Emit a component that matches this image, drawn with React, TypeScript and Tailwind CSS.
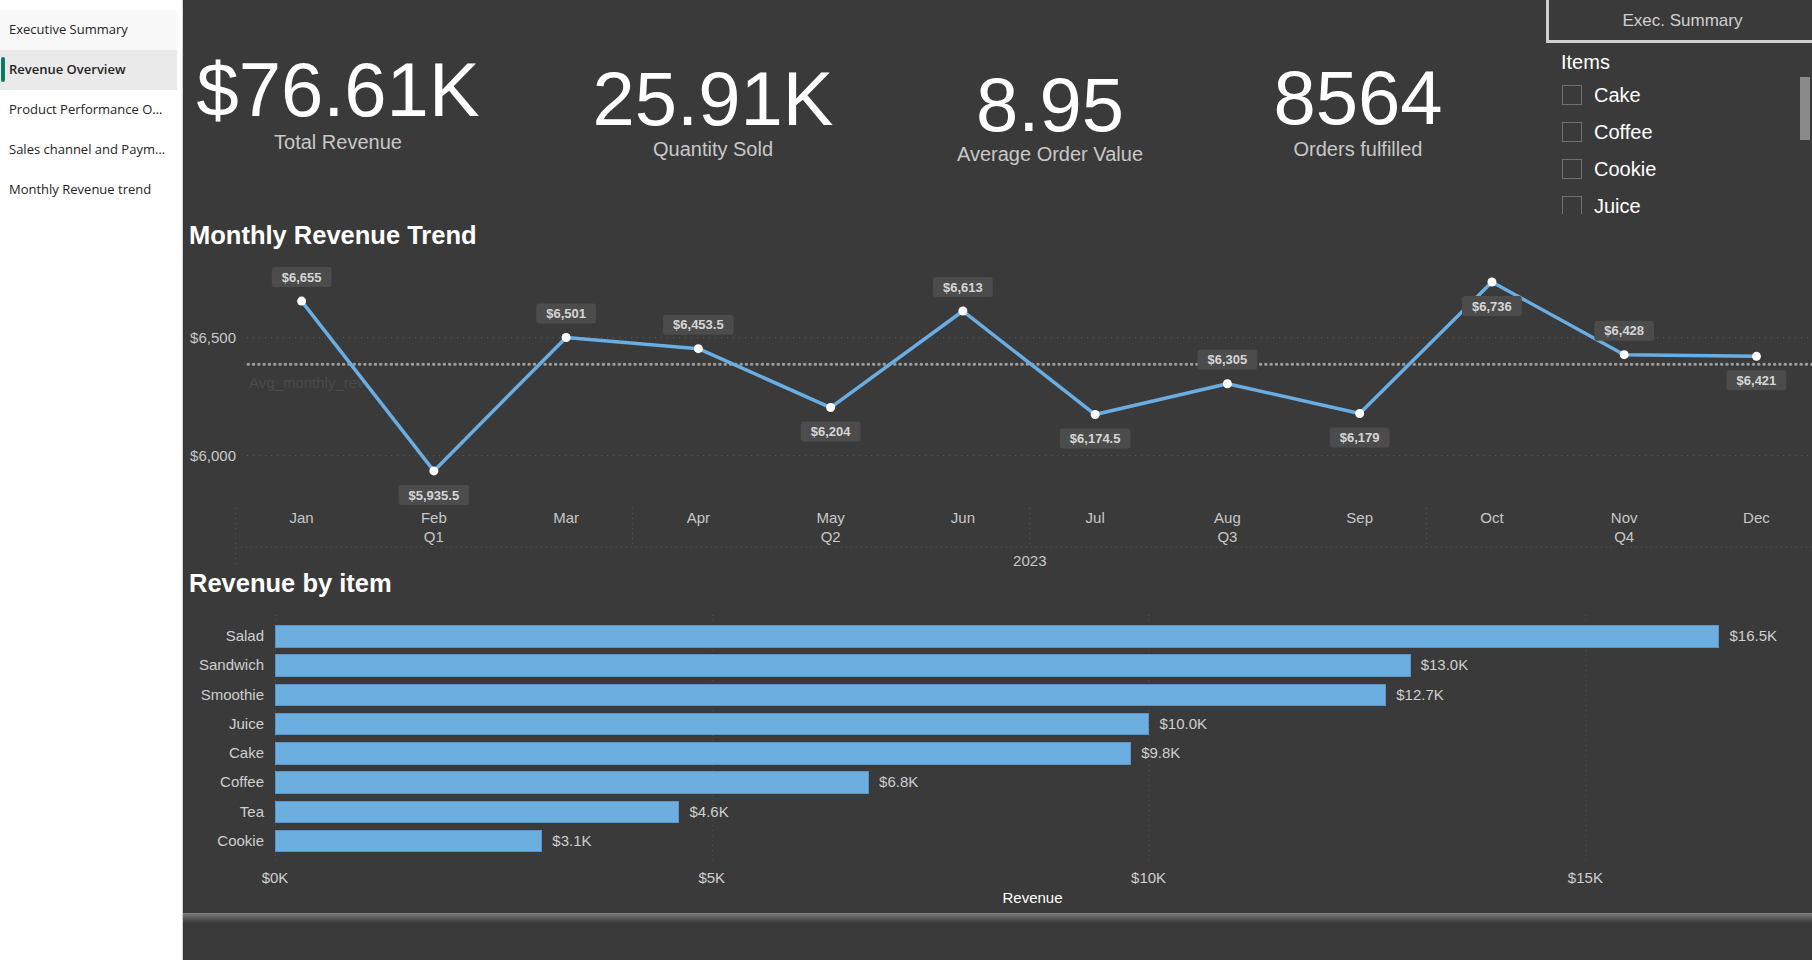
import React from 'react'

const pages = [
    'Executive Summary',
    'Revenue Overview',
    'Product Performance Overview',
    'Sales channel and Payment method',
    'Monthly Revenue trend',
]

const kpis = [
    { value: '$76.61K', label: 'Total Revenue', box: 'ml-[5px] pt-[52px]', gap: 'mt-[3px]' },
    { value: '25.91K', label: 'Quantity Sold', box: 'ml-[75px] pt-[61px]', gap: 'mt-[1px]' },
    { value: '8.95', label: 'Average Order Value', box: 'ml-[37px] pt-[67px]', gap: 'mt-0' },
    { value: '8564', label: 'Orders fulfilled', box: 'ml-[8px] pt-[60px]', gap: 'mt-[2px]' },
]

const slicerItems = ['Cake', 'Coffee', 'Cookie', 'Juice', 'Salad']

// monthly revenue, label position relative to the point
const months = [
    { m: 'Jan', v: 6655, label: '$6,655', up: true },
    { m: 'Feb', v: 5935.5, label: '$5,935.5', up: false, q: 'Q1' },
    { m: 'Mar', v: 6501, label: '$6,501', up: true },
    { m: 'Apr', v: 6453.5, label: '$6,453.5', up: true },
    { m: 'May', v: 6204, label: '$6,204', up: false, q: 'Q2' },
    { m: 'Jun', v: 6613, label: '$6,613', up: true },
    { m: 'Jul', v: 6174.5, label: '$6,174.5', up: false },
    { m: 'Aug', v: 6305, label: '$6,305', up: true, q: 'Q3' },
    { m: 'Sep', v: 6179, label: '$6,179', up: false },
    { m: 'Oct', v: 6736, label: '$6,736', up: false },
    { m: 'Nov', v: 6428, label: '$6,428', up: true, q: 'Q4' },
    { m: 'Dec', v: 6421, label: '$6,421', up: false },
]

const items = [
    { name: 'Salad', v: 16535, label: '$16.5K' },
    { name: 'Sandwich', v: 13000, label: '$13.0K' },
    { name: 'Smoothie', v: 12720, label: '$12.7K' },
    { name: 'Juice', v: 10010, label: '$10.0K' },
    { name: 'Cake', v: 9800, label: '$9.8K' },
    { name: 'Coffee', v: 6800, label: '$6.8K' },
    { name: 'Tea', v: 4630, label: '$4.6K' },
    { name: 'Cookie', v: 3060, label: '$3.1K' },
]

const X0 = 118.6
const DX = 132.26
const xOf = (i: number) => X0 + i * DX
const yOf = (v: number) => 87.7 - (v - 6500) * 0.236

// rough Arial bold widths for the data labels
const labelWidth = (s: string) =>
    s.split('').reduce((w, c) => w + (c === ',' || c === '.' ? 0.278 : 0.556), 0) * 13 + 20

function Sidebar() {
    return (
        <aside className="h-full w-[183px] shrink-0 border-r border-[#d0d0d0] bg-white pt-[10px] font-['Open_Sans',sans-serif]">
            {pages.map((p, i) => (
                <div
                    key={p}
                    className={`relative flex h-[40px] w-[177px] items-center pl-[9px] pr-[10px] text-[13px] text-[#252423] ${
                        i === 1 ? 'bg-[#eaeaea] font-semibold' : i === 0 ? 'bg-[#f8f8f8]' : ''
                    }`}
                >
                    {i === 1 && <span className="absolute left-[1px] top-[7px] h-[25px] w-[4px] rounded-full bg-[#117865]" />}
                    <span className="block truncate">{p}</span>
                </div>
            ))}
        </aside>
    )
}

function Slicer() {
    return (
        <div className="relative w-[266px] shrink-0 overflow-hidden">
            <div className="flex h-[43px] w-[270px] items-center justify-center border-b-[3px] border-l-[3px] border-[#cfcfcf] pt-[1px] text-[17px] text-[#d0d0d0]">
                Exec. Summary
            </div>
            <div className="mt-[7px] pl-[15px] text-[20px] leading-[24px] text-white">Items</div>
            <div className="mt-[2px] h-[138px] overflow-hidden">
                {slicerItems.map((it) => (
                    <div key={it} className="flex h-[37px] items-center gap-[12px] pl-[16px]">
                        <span className="h-[20px] w-[20px] border border-[#707070]" />
                        <span className="text-[20px] text-white">{it}</span>
                    </div>
                ))}
            </div>
            <div className="absolute right-[2px] top-[77px] h-[63px] w-[10px] bg-[#8a8a8a]" />
        </div>
    )
}

function LineChart() {
    const pts = months.map((d, i) => `${xOf(i)},${yOf(d.v)}`).join(' ')
    return (
        <svg width={1629} height={318} viewBox="0 0 1629 318" className="block shrink-0">
            {/* y gridlines */}
            <line x1={64} x2={1629} y1={87.7} y2={87.7} stroke="#606060" strokeDasharray="1 5" />
            <line x1={64} x2={1629} y1={205.7} y2={205.7} stroke="#606060" strokeDasharray="1 5" />
            <text x={53} y={93} textAnchor="end" fontSize={15} fill="#c8c8c8">$6,500</text>
            <text x={53} y={211} textAnchor="end" fontSize={15} fill="#c8c8c8">$6,000</text>

            {/* average line */}
            <text x={66} y={138} fontSize={15} fill="#4a4a4a">Avg_monthly_rev</text>
            <line
                x1={65}
                x2={1629}
                y1={114.3}
                y2={114.3}
                stroke="#9c9c9c"
                strokeWidth={3}
                strokeDasharray="0.5 4.8"
                strokeLinecap="round"
            />

            {/* x axis */}
            <line x1={52.7} x2={52.7} y1={258} y2={318} stroke="#5c5c5c" strokeDasharray="1 4" />
            {[449.3, 846.8, 1243.5].map((x) => (
                <line key={x} x1={x} x2={x} y1={258} y2={297} stroke="#5c5c5c" strokeDasharray="1 4" />
            ))}
            <line x1={52.7} x2={1629} y1={297} y2={297} stroke="#5c5c5c" strokeDasharray="1 4" />
            {months.map((d, i) => (
                <text key={d.m} x={xOf(i)} y={273} textAnchor="middle" fontSize={15} fill="#c8c8c8">
                    {d.m}
                </text>
            ))}
            {months.map((d, i) =>
                d.q ? (
                    <text key={d.q} x={xOf(i)} y={291.5} textAnchor="middle" fontSize={15} fill="#c8c8c8">
                        {d.q}
                    </text>
                ) : null
            )}
            <text x={846.8} y={316} textAnchor="middle" fontSize={15} fill="#c8c8c8">2023</text>

            {/* series */}
            <polyline points={pts} fill="none" stroke="#6aade2" strokeWidth={3.5} strokeLinejoin="round" />
            {months.map((d, i) => (
                <circle key={d.m} cx={xOf(i)} cy={yOf(d.v)} r={4.5} fill="#ffffff" />
            ))}
            {months.map((d, i) => {
                const cx = xOf(i)
                const cy = yOf(d.v) + (d.up ? -24 : 24)
                const w = labelWidth(d.label)
                return (
                    <g key={d.label}>
                        <rect x={cx - w / 2} y={cy - 10} width={w} height={20} rx={3} fill="#4c4c4c" />
                        <text x={cx} y={cy + 4.6} textAnchor="middle" fontSize={13} fontWeight={700} fill="#d6d6d6">
                            {d.label}
                        </text>
                    </g>
                )
            })}
        </svg>
    )
}

function BarChart() {
    return (
        <div className="relative h-[315px] shrink-0">
            {/* dotted value gridlines */}
            <svg width={1420} height={250} className="absolute left-[92px] top-[17px]">
                {[0.5, 437.3, 874.1, 1310.9].map((x) => (
                    <line key={x} x1={x} x2={x} y1={0} y2={250} stroke="#555555" strokeDasharray="1 4" />
                ))}
            </svg>

            <div className="relative flex flex-col gap-[6.75px] pt-[27px]">
                {items.map((it) => (
                    <div key={it.name} className="flex h-[22.5px] items-center">
                        <span className="w-[81px] text-right text-[15px] text-[#cfcfcf]">{it.name}</span>
                        <span
                            className="ml-[11px] h-full border border-[#5b94c7] bg-[#6caee0]"
                            style={{ width: it.v * 0.08736 }}
                        />
                        <span className="ml-[10px] text-[15px] text-[#cfcfcf]">{it.label}</span>
                    </div>
                ))}
            </div>

            <div className="relative ml-[62px] mt-[17px] flex gap-[376.8px]">
                {['$0K', '$5K', '$10K', '$15K'].map((t) => (
                    <span key={t} className="w-[60px] text-center text-[15px] leading-[18px] text-[#cfcfcf]">
                        {t}
                    </span>
                ))}
            </div>
            <div className="ml-[92px] mt-[2px] w-[1515px] text-center text-[15px] leading-[18px] text-white">Revenue</div>
        </div>
    )
}

export default function App() {
    return (
        <div className="flex h-[960px] w-[1812px] overflow-hidden bg-[#3a3a3a] font-['Liberation_Sans',Arial,sans-serif]">
            <Sidebar />

            <main className="flex min-w-0 flex-1 flex-col">
                {/* KPI cards + slicer */}
                <div className="flex h-[220px] shrink-0">
                    <div className="flex flex-1 items-start">
                        {kpis.map((k) => (
                            <div key={k.label} className={`flex w-[300px] flex-col items-center ${k.box}`}>
                                <span className="text-[76px] leading-[75px] text-white">{k.value}</span>
                                <span className={`text-[20px] leading-[24px] text-[#c8c8c8] ${k.gap}`}>{k.label}</span>
                            </div>
                        ))}
                    </div>
                    <Slicer />
                </div>

                <h2 className="h-[30px] shrink-0 pl-[6px] text-[25.5px] font-bold leading-[30px] text-white">
                    Monthly Revenue Trend
                </h2>
                <LineChart />

                <h2 className="h-[30px] shrink-0 pl-[6px] text-[25.5px] font-bold leading-[30px] text-white">
                    Revenue by item
                </h2>
                <BarChart />

                <div className="h-[10px] shrink-0 bg-linear-to-b from-[#7d7d7d] to-[#3a3a3a]" />
            </main>
        </div>
    )
}
